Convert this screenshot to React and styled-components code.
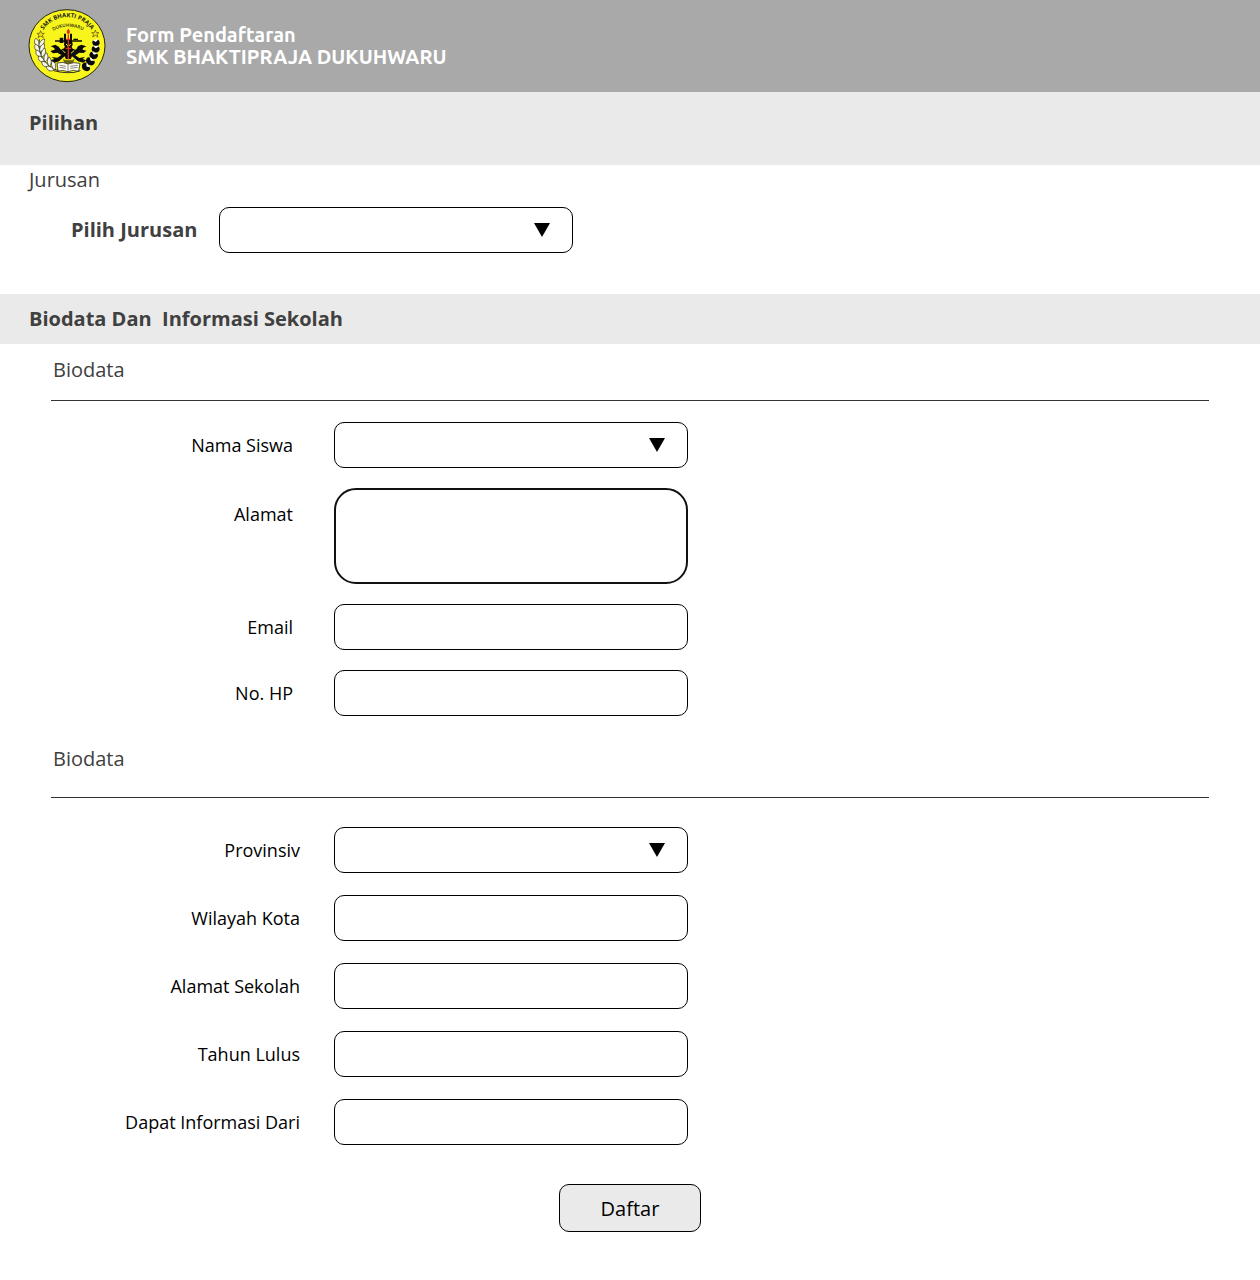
import React from "react";
import styled, { createGlobalStyle } from "styled-components";

const GlobalStyle = createGlobalStyle`
  *, *::before, *::after { box-sizing: border-box; }
  body {
    margin: 0;
    background: #fff;
    color: #000;
    font-family: "Open Sans", "Noto Sans", sans-serif;
  }
`;

const Header = styled.header`
  display: flex;
  align-items: center;
  gap: 20px;
  min-height: 92px;
  padding: 8px 28px;
  background: #a9a9a9;
  color: #fff;
`;

const LogoSvg = styled.svg`
  flex: none;
  width: 78px;
  height: 74px;
`;

const LogoText = styled.text`
  font-family: "Open Sans", sans-serif;
  font-weight: ${(p) => (p.$light ? 600 : 700)};
  font-size: ${(p) => (p.$light ? 14 : 18)}px;
  fill: #1a1a10;
`;

const Title = styled.h1`
  margin: 0;
  font-family: Ubuntu, "Noto Sans", sans-serif;
  font-size: 20px;
  line-height: 22px;
  font-weight: 700;
`;

const TitleLine = styled.span`
  display: block;
`;

const Bar = styled.h2`
  margin: 0;
  padding: ${(p) => (p.$tall ? "19px 29px 30px" : "13px 29px")};
  background: #eaeaea;
  color: #404040;
  font-size: 20px;
  line-height: 24px;
  font-weight: 700;
  white-space: pre-wrap;
`;

const Choice = styled.section`
  padding: 3px 29px 41px;
`;

const SubTitle = styled.h3`
  margin: 0;
  color: #404040;
  font-size: 20px;
  line-height: 24px;
  font-weight: 400;
`;

const ChoiceRow = styled.div`
  display: flex;
  align-items: center;
  gap: 22px;
  margin-top: 15px;
  padding-left: 42px;
`;

const ChoiceLabel = styled.label`
  color: #404040;
  font-size: 20px;
  line-height: 24px;
  font-weight: 700;
`;

const Group = styled.section`
  padding: ${(p) => p.$top}px 51px 0;
`;

const GroupTitle = styled(SubTitle)`
  padding: 0 2px ${(p) => p.$space}px;
  border-bottom: 1px solid #333;
`;

const Fields = styled.div`
  display: grid;
  gap: ${(p) => p.$gap}px;
  padding-top: ${(p) => p.$top}px;
`;

const Row = styled.div`
  display: grid;
  grid-template-columns: ${(p) => p.$label}px minmax(0, 354px);
  column-gap: ${(p) => p.$gap}px;
  align-items: ${(p) => (p.$start ? "start" : "center")};
`;

const Label = styled.label`
  padding-top: ${(p) => (p.$start ? 14 : 0)}px;
  font-size: 18px;
  line-height: 24px;
  text-align: right;
`;

const TextBox = styled.input`
  width: 100%;
  height: 46px;
  padding: 0 14px;
  border: 1px solid #000;
  border-radius: 10px;
  background: #fff;
  font: inherit;
  font-size: 18px;
`;

const TextArea = styled.textarea`
  display: block;
  width: 100%;
  height: 96px;
  padding: 14px;
  border: 2px solid #111;
  border-radius: 22px;
  background: #fff;
  font: inherit;
  font-size: 18px;
  resize: none;
`;

const SelectWrap = styled.div`
  position: relative;
  width: 100%;
  max-width: 354px;
`;

const SelectBox = styled.select`
  display: block;
  width: 100%;
  height: 46px;
  padding: 0 48px 0 14px;
  border: 1px solid #000;
  border-radius: 10px;
  background: #fff;
  appearance: none;
  font: inherit;
  font-size: 18px;
`;

const Arrow = styled.svg`
  position: absolute;
  top: 16px;
  right: 23px;
  width: 16px;
  height: 14px;
  pointer-events: none;
`;

const Actions = styled.div`
  display: flex;
  justify-content: center;
  padding: 39px 0 48px;
`;

const Submit = styled.button`
  width: 142px;
  height: 48px;
  border: 1px solid #000;
  border-radius: 10px;
  background: #eaeaea;
  color: #000;
  font: inherit;
  font-size: 20px;
  cursor: pointer;
`;

const starPath = "M0-11 3-3 11-3 5 2 8 10 0 5-8 10-5 2-11-3-3-3Z";

const leaves = [
  [56, 128, 2], [57, 144, -6], [61, 160, -14], [69, 176, -24], [80, 190, -34], [94, 202, -46],
];

const beads = [
  [228, 128, 11, 80], [227, 147, 12, 95], [221, 166, 13, 110], [211, 184, 14, 125], [198, 201, 14, 140],
];

function Logo() {
  return (
    <LogoSvg viewBox="24 27 234 222" role="img" aria-label="SMK Bhakti Praja Dukuhwaru">
      <defs>
        <path id="arc-outer" d="M61 107A87 87 0 0 1 223 107" />
        <path id="arc-inner" d="M92 97A90 90 0 0 1 196 97" />
      </defs>
      <ellipse cx="141" cy="137" rx="114" ry="108" fill="#f8f51c" stroke="#25250d" strokeWidth="3" />
      <LogoText textAnchor="middle">
        <textPath href="#arc-outer" startOffset="50%">SMK BHAKTI PRAJA</textPath>
      </LogoText>
      <LogoText $light textAnchor="middle">
        <textPath href="#arc-inner" startOffset="50%">DUKUHWARU</textPath>
      </LogoText>
      {[[62, 103], [226, 101]].map(([x, y]) => (
        <path key={x} d={starPath} transform={`translate(${x} ${y})`} fill="#f8e51c" stroke="#6d6510" strokeWidth="2.5" />
      ))}

      <path d="M58 118C52 160 72 198 118 213" fill="none" stroke="#222" strokeWidth="3" />
      {leaves.map(([x, y, r]) => (
        <g key={y} transform={`translate(${x} ${y}) rotate(${r})`} fill="#f6f6f0" stroke="#33331c" strokeWidth="2">
          <path d="M0 12C-13 7-16-3-9-13C-1-8 3 0 0 12Z" />
          <path d="M1 12C1 0 6-9 17-12C19 0 13 10 1 12Z" />
        </g>
      ))}

      {beads.map(([x, y, s, r]) => (
        <g key={y} transform={`translate(${x} ${y}) rotate(${r - 90})`}>
          <path d={`M${-s} 0Q${-s}-9-4-9L0-4 4-9Q${s}-9 ${s} 0Q${s} 9 0 12Q${-s} 9 ${-s} 0Z`} fill="#090909" />
          <path d="M-8-8Q-3-13 0-8Q3-13 8-8L4-5 0-2-4-5Z" fill="#fff" />
        </g>
      ))}

      <g fill="#0c0c08">
        <path d="M92 139L106 134 116 140 123 149 132 145 138 134H151L158 146 168 149 174 139 184 134 199 139 189 144 188 149 199 152 191 159 178 158 166 166 178 174 195 171 188 177 199 181 190 188 174 184 156 169 151 181H139L134 169 117 184 104 188 92 181 103 177 95 171 112 173 124 165 112 158 99 160 91 153 104 149 103 144Z" />
        <path d="M132 101H138V127H132ZM150 101H156V127H150ZM105 121H186V125H105ZM119 113H130V129H119ZM160 116H174V120H160Z" />
        <circle cx="145" cy="132" r="13" />
      </g>
      <path d="M129 178H164L158 191H134Z" fill="#65610c" />
      <path d="M138 132L145 139 152 132M128 151L136 159M163 151L153 160M133 179H160" fill="none" stroke="#f8f51c" strokeWidth="3" />
      <path d="M145 86C136 96 142 99 145 105C149 99 153 95 145 86ZM143 105H147V178H143ZM138 116H151V120H138ZM137 143H153V147H137Z" fill="#e3291c" />

      <path d="M111 189Q130 184 144 192Q161 185 180 190L176 214Q159 208 144 215Q128 209 114 213Z" fill="#fafaf2" stroke="#343422" strokeWidth="2.5" />
      <path d="M144 193V215M119 196L137 199M119 202L137 205M151 199L173 196M151 205L173 202" fill="none" stroke="#55554b" strokeWidth="2" />
      <path d="M101 212Q122 218 141 218Q162 220 181 212" fill="none" stroke="#343422" strokeWidth="3" />
    </LogoSvg>
  );
}

function Select({ id }) {
  return (
    <SelectWrap>
      <SelectBox id={id} name={id} defaultValue="">
        <option value="" />
      </SelectBox>
      <Arrow viewBox="0 0 16 14" aria-hidden="true">
        <path d="M0 0H16L8 14Z" />
      </Arrow>
    </SelectWrap>
  );
}

function Field({ id, label, kind = "text", labelWidth, gap }) {
  const start = kind === "area";
  return (
    <Row $label={labelWidth} $gap={gap} $start={start}>
      <Label htmlFor={id} $start={start}>{label}</Label>
      {kind === "select" && <Select id={id} />}
      {kind === "area" && <TextArea id={id} name={id} />}
      {kind !== "select" && kind !== "area" && <TextBox id={id} name={id} type={kind} />}
    </Row>
  );
}

const biodata = [
  { id: "nama", label: "Nama Siswa", kind: "select" },
  { id: "alamat", label: "Alamat", kind: "area" },
  { id: "email", label: "Email", kind: "email" },
  { id: "hp", label: "No. HP", kind: "tel" },
];

const sekolah = [
  { id: "provinsi", label: "Provinsiv", kind: "select" },
  { id: "kota", label: "Wilayah Kota" },
  { id: "alamat-sekolah", label: "Alamat Sekolah" },
  { id: "lulus", label: "Tahun Lulus" },
  { id: "informasi", label: "Dapat Informasi Dari" },
];

export default function App() {
  return (
    <>
      <GlobalStyle />
      <Header>
        <Logo />
        <Title>
          <TitleLine>Form Pendaftaran</TitleLine>
          <TitleLine>SMK BHAKTIPRAJA DUKUHWARU</TitleLine>
        </Title>
      </Header>
      <form onSubmit={(e) => e.preventDefault()}>
        <Bar $tall>Pilihan</Bar>
        <Choice>
          <SubTitle>Jurusan</SubTitle>
          <ChoiceRow>
            <ChoiceLabel htmlFor="jurusan">Pilih Jurusan</ChoiceLabel>
            <Select id="jurusan" />
          </ChoiceRow>
        </Choice>
        <Bar>{"Biodata Dan  Informasi Sekolah"}</Bar>
        <Group $top={14}>
          <GroupTitle $space={18}>Biodata</GroupTitle>
          <Fields $gap={20} $top={21}>
            {biodata.map((f) => <Field key={f.id} {...f} labelWidth={242} gap={41} />)}
          </Fields>
        </Group>
        <Group $top={31}>
          <GroupTitle $space={26}>Biodata</GroupTitle>
          <Fields $gap={22} $top={29}>
            {sekolah.map((f) => <Field key={f.id} {...f} labelWidth={249} gap={34} />)}
          </Fields>
        </Group>
        <Actions>
          <Submit type="submit">Daftar</Submit>
        </Actions>
      </form>
    </>
  );
}
